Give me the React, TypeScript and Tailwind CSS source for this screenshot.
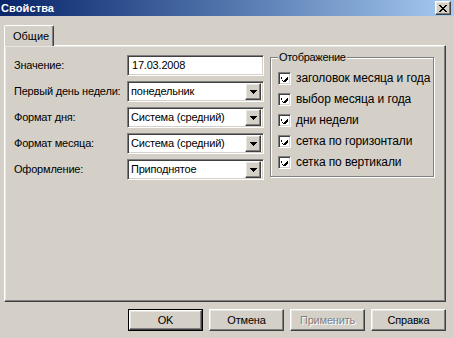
import React from "react";

const raised =
  "border border-t-white border-l-white border-r-[#404040] border-b-[#404040] shadow-[inset_-1px_-1px_0_#808080,inset_1px_1px_0_#e8e6e0]";
const sunken =
  "border border-t-[#808080] border-l-[#808080] border-r-white border-b-white shadow-[inset_1px_1px_0_#404040,inset_-1px_-1px_0_#d4d0c8]";

function Check() {
  return (
    <div className={`w-[13px] h-[13px] shrink-0 bg-white flex items-center justify-center ${sunken}`}>
      <svg width="7" height="7" viewBox="0 0 7 7" shapeRendering="crispEdges">
        <path d="M0 2h1v3h1v1h1v-1h1v-1h1v-1h1v-1h1v3h-1v1h-1v1h-1v1h-1v-1h-1v-1h-1z" fill="#000" />
      </svg>
    </div>
  );
}

function Combo({ value }: { value: string }) {
  return (
    <div className={`w-[137px] h-[21px] bg-white flex items-center pl-[3px] pr-[2px] ${sunken}`}>
      <span className="flex-1 truncate">{value}</span>
      <div className={`w-[16px] h-[17px] bg-[#d4d0c8] flex items-center justify-center ${raised}`}>
        <svg width="7" height="4" viewBox="0 0 7 4" shapeRendering="crispEdges">
          <path d="M0 0h7v1h-1v1h-1v1h-1v1h-1v-1h-1v-1h-1v-1h-1z" fill="#000" />
        </svg>
      </div>
    </div>
  );
}

export default function App() {
  const rows = [
    { label: "Первый день недели:", value: "понедельник" },
    { label: "Формат дня:", value: "Система (средний)" },
    { label: "Формат месяца:", value: "Система (средний)" },
    { label: "Оформление:", value: "Приподнятое" },
  ];
  const checks = [
    "заголовок месяца и года",
    "выбор месяца и года",
    "дни недели",
    "сетка по горизонтали",
    "сетка по вертикали",
  ];

  return (
    <div className="w-[454px] h-[338px] bg-[#d4d0c8] flex flex-col overflow-hidden text-[11px] leading-[13px] tracking-[-0.2px] text-black font-['Liberation_Sans',Arial,sans-serif]">
      {/* title bar */}
      <div className="h-[16px] flex items-center justify-between bg-gradient-to-r from-[#0a246a] to-[#a6caf0]">
        <span className="pl-[1px] text-white font-bold text-[11px] tracking-[0.1px]">Свойства</span>
        <div className={`w-[16px] h-[14px] mr-[3px] bg-[#d4d0c8] flex items-center justify-center ${raised}`}>
          <svg width="8" height="7" viewBox="0 0 8 7" shapeRendering="crispEdges">
            <path d="M0 0h2v1h1v1h2v-1h1v-1h2v1h-1v1h-1v1h-1v1h1v1h1v1h1v1h-2v-1h-1v-1h-2v1h-1v1h-2v-1h1v-1h1v-1h1v-1h-1v-1h-1v-1h-1z" fill="#000" />
          </svg>
        </div>
      </div>

      {/* tab */}
      <div className="mt-[9px] ml-[4px] flex">
        <div className="relative z-10 -mb-[1px] w-[50px] h-[21px] bg-[#d4d0c8] border-t border-l border-white border-r border-r-[#404040] shadow-[inset_-1px_0_0_#808080] rounded-tl-[2px] rounded-tr-[2px] pl-[8px] pt-[4px] tracking-[0px]">
          Общие
        </div>
      </div>

      {/* panel */}
      <div className={`ml-[4px] w-[442px] h-[257px] pl-[9px] pt-[9px] flex ${raised}`}>
        <div className="flex flex-col gap-[5px]">
          <div className="flex items-center h-[21px]">
            <span className="w-[113px]">Значение:</span>
            <div className={`w-[137px] h-[21px] bg-white flex items-center pl-[4px] ${sunken}`}>17.03.2008</div>
          </div>
          {rows.map((r) => (
            <div key={r.label} className="flex items-center h-[21px]">
              <span className="w-[113px] whitespace-nowrap">{r.label}</span>
              <Combo value={r.value} />
            </div>
          ))}
        </div>

        <div className="ml-[6px] -mt-[2px]">
          <div className="relative mt-[4px] w-[164px] h-[120px] border border-[#808080] shadow-[1px_1px_0_white,inset_1px_1px_0_white] pl-[7px] pt-[14px] flex flex-col gap-[8px]">
            <span className="absolute -top-[7px] left-[7px] px-[1px] bg-[#d4d0c8] tracking-[-0.3px]">Отображение</span>
            {checks.map((c) => (
              <div key={c} className="flex items-center gap-[5px] h-[13px]">
                <Check />
                <span className="whitespace-nowrap text-[12px] tracking-[-0.1px]">{c}</span>
              </div>
            ))}
          </div>
        </div>
      </div>

      {/* buttons */}
      <div className="mt-[7px] w-[446px] flex justify-end gap-[6px]">
        <div className="w-[75px] h-[22px] border border-black">
          <div className={`w-full h-full flex items-center justify-center ${raised}`}>OK</div>
        </div>
        <div className={`w-[75px] h-[22px] flex items-center justify-center ${raised}`}>Отмена</div>
        <div className={`w-[75px] h-[22px] flex items-center justify-center text-[#808080] [text-shadow:1px_1px_0_white] ${raised}`}>
          Применить
        </div>
        <div className={`w-[75px] h-[22px] flex items-center justify-center ${raised}`}>Справка</div>
      </div>
    </div>
  );
}
